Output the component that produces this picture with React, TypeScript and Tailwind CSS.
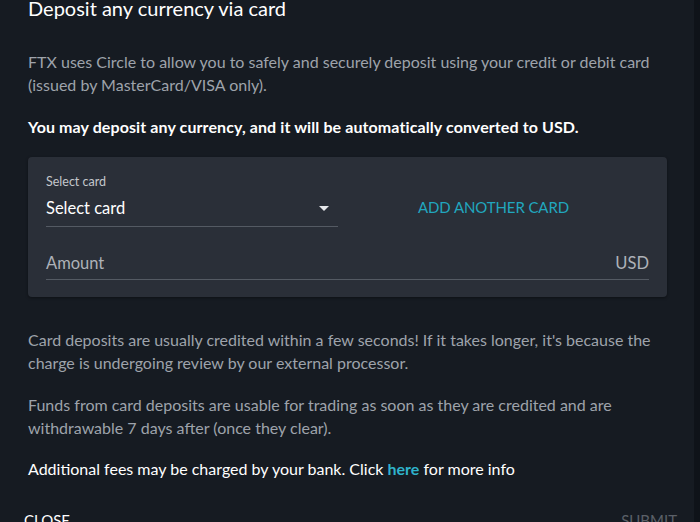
export default function App() {
  return (
    <div
      className="w-[700px] h-[522px] overflow-hidden bg-[#0f1319] flex"
      style={{ fontFamily: "Lato, 'Open Sans', sans-serif" }}
    >
      <div className="w-[694px] h-full bg-[#161b22]">
        <div className="px-[28px]">
          <h2 className="text-[20px] leading-[24px] text-white -mt-[4px]">
            Deposit any currency via card
          </h2>

          <p className="mt-[30px] text-[16px] leading-[23px] text-[#9ea3ab]">
            FTX uses Circle to allow you to safely and securely deposit using your credit or debit card
            (issued by MasterCard/VISA only).
          </p>

          <p className="mt-[19px] text-[16px] leading-[23px] font-bold text-white tracking-[0.1px]">
            You may deposit any currency, and it will be automatically converted to USD.
          </p>

          {/* card form */}
          <div className="mt-[19px] w-[639px] h-[140px] rounded bg-[#2a2f38] shadow-[0_1px_3px_rgba(0,0,0,0.4)] px-[18px] pt-[17px]">
            <div className="flex items-center">
              <div className="w-[292px] border-b border-[#545a63]">
                <div className="text-[12.5px] leading-[15px] text-[#c4c7cc]">Select card</div>
                <div className="flex items-center justify-between h-[37px] pt-[2px] pr-[6px]">
                  <span className="text-[16.5px] text-white">Select card</span>
                  <svg width="10" height="5" viewBox="0 0 10 5" className="mr-[3px]">
                    <path d="M0 0h10L5 5z" fill="#e6e8eb" />
                  </svg>
                </div>
              </div>
              <button className="ml-[80px] mt-[14px] text-[15px] text-[#21a7bf] tracking-[-0.1px]">
                ADD ANOTHER CARD
              </button>
            </div>
            <div className="mt-[24px] flex items-center justify-between border-b border-[#545a63] pb-[4px] text-[16.5px] leading-[24px] text-[#aeb2b8]">
              <span>Amount</span>
              <span>USD</span>
            </div>
          </div>

          <p className="mt-[31px] text-[16px] leading-[23px] text-[#9ea3ab]">
            Card deposits are usually credited within a few seconds! If it takes longer, it's because the
            charge is undergoing review by our external processor.
          </p>
          <p className="mt-[19px] text-[16px] leading-[23px] text-[#9ea3ab]">
            Funds from card deposits are usable for trading as soon as they are credited and are
            withdrawable 7 days after (once they clear).
          </p>
          <p className="mt-[18px] text-[16px] leading-[23px] text-white">
            Additional fees may be charged by your bank. Click{" "}
            <a className="text-[#2fb3cc] font-bold">here</a> for more info
          </p>
        </div>

        <div className="mt-[29px] flex justify-between pl-[24px] pr-[17px]">
          <span className="text-[15px] text-white">CLOSE</span>
          <span className="text-[15px] text-[#5b6068]">SUBMIT</span>
        </div>
      </div>
    </div>
  );
}
